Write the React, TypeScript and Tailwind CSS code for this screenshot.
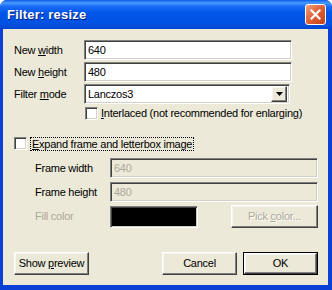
import React from "react";

const font = { fontFamily: '"Liberation Sans", Arial, sans-serif' };

const sunken =
  "border border-t-[#808080] border-l-[#808080] border-b-white border-r-white shadow-[inset_1px_1px_0_#404040,inset_-1px_-1px_0_#d4d0c8]";
const raised =
  "border border-t-white border-l-white border-b-[#404040] border-r-[#404040] shadow-[inset_-1px_-1px_0_#808080,inset_1px_1px_0_#f5f4ee] bg-[#ece9d8]";

function Input({ value, disabled, w = "w-[208px]" }: { value: string; disabled?: boolean; w?: string }) {
  return (
    <div
      className={`${w} h-[20px] ${sunken} flex items-center pl-[3px] text-[11px] ${
        disabled ? "bg-[#ece9d8] text-[#aca899]" : "bg-white text-black"
      }`}
    >
      <span>{value}</span>
    </div>
  );
}

function Checkbox() {
  return <div className={`w-[13px] h-[13px] bg-white ${sunken} shrink-0`} />;
}

function Button({ children, className = "", def }: { children: React.ReactNode; className?: string; def?: boolean }) {
  if (def) {
    return (
      <div className={`border border-black ${className}`}>
        <div className={`w-full h-full ${raised} flex items-center justify-center text-[11px] text-black`}>
          <span>{children}</span>
        </div>
      </div>
    );
  }
  return (
    <div className={`${raised} flex items-center justify-center text-[11px] text-black ${className}`}>
      <span>{children}</span>
    </div>
  );
}

export default function App() {
  return (
    <div
      style={font}
      className="w-[332px] h-[290px] bg-[#0b3fd6] rounded-t-[7px] flex flex-col overflow-hidden select-none"
    >
      <div className="h-[29px] shrink-0 bg-[linear-gradient(to_bottom,#0a5ae6_0%,#4a9bff_10%,#1a6cf5_22%,#0055e8_45%,#0052e2_80%,#0046d2_100%)] flex items-center justify-between pl-[7px] pr-[6px]">
        <span className="text-white font-bold text-[13px] tracking-[0.2px] [text-shadow:1px_1px_0_#0a1f7a]">
          Filter: resize
        </span>
        <div className="w-[21px] h-[21px] rounded-[3px] border border-white bg-[linear-gradient(135deg,#f0a07e_0%,#e0643a_45%,#c2401a_100%)] flex items-center justify-center">
          <svg width="11" height="11" viewBox="0 0 11 11">
            <path d="M1.5 1.5 L9.5 9.5 M9.5 1.5 L1.5 9.5" stroke="white" strokeWidth="2.2" strokeLinecap="square" />
          </svg>
        </div>
      </div>
      <div className="flex-1 ml-[3px] mr-[4px] mb-[5px] bg-[#ece9d8] pl-[11px] pt-[11px] text-[11px] tracking-[-0.25px] text-black flex flex-col">
        <div className="flex items-center h-[20px] mb-[2px]">
          <span className="w-[70px]">
            New <u>w</u>idth
          </span>
          <Input value="640" />
        </div>
        <div className="flex items-center h-[20px] mb-[2px]">
          <span className="w-[70px]">
            New <u>h</u>eight
          </span>
          <Input value="480" />
        </div>
        <div className="flex items-center h-[20px]">
          <span className="w-[70px]">
            Filter <u>m</u>ode
          </span>
          <div className={`w-[206px] h-[20px] ${sunken} bg-white flex items-center justify-between pl-[3px] pr-[2px]`}>
            <span>Lanczos3</span>
            <div className={`w-[16px] h-[16px] ${raised} flex items-center justify-center`}>
              <svg width="7" height="4" viewBox="0 0 7 4">
                <path d="M0 0 H7 L3.5 4 Z" fill="black" />
              </svg>
            </div>
          </div>
        </div>
        <div className="flex items-center mt-[3px] h-[13px] pl-[71px]">
          <Checkbox />
          <span className="ml-[3px]">
            <u>I</u>nterlaced (not recommended for enlarging)
          </span>
        </div>
        <div className="flex items-center mt-[17px] h-[13px]">
          <Checkbox />
          <span className="ml-[4px] px-[1px] outline outline-1 outline-dotted outline-black leading-[12px]">
            <u>E</u>xpand frame and letterbox image
          </span>
        </div>
        <div className="flex items-center h-[20px] mt-[8px]">
          <span className="w-[96px] pl-[21px]">Frame width</span>
          <Input value="640" disabled />
        </div>
        <div className="flex items-center h-[20px] mt-[4px]">
          <span className="w-[96px] pl-[21px]">Frame height</span>
          <Input value="480" disabled />
        </div>
        <div className="flex items-center h-[23px] mt-[3px]">
          <span className="w-[96px] pl-[21px] text-[#aca899]">Fill color</span>
          <div className={`w-[88px] h-[22px] bg-black ${sunken}`} />
          <div className={`${raised} w-[87px] h-[23px] ml-[33px] flex items-center justify-center`}>
            <span className="text-[#aca899] [text-shadow:1px_1px_0_white]">
              Pick <u>c</u>olor...
            </span>
          </div>
        </div>
        <div className="flex items-center h-[23px] mt-[24px]">
          <Button className="w-[75px] h-[23px]">
            Show <u>p</u>review
          </Button>
          <Button className="w-[75px] h-[23px] ml-[73px]">Cancel</Button>
          <Button className="w-[75px] h-[23px] ml-[6px]" def>
            OK
          </Button>
        </div>
      </div>
    </div>
  );
}
